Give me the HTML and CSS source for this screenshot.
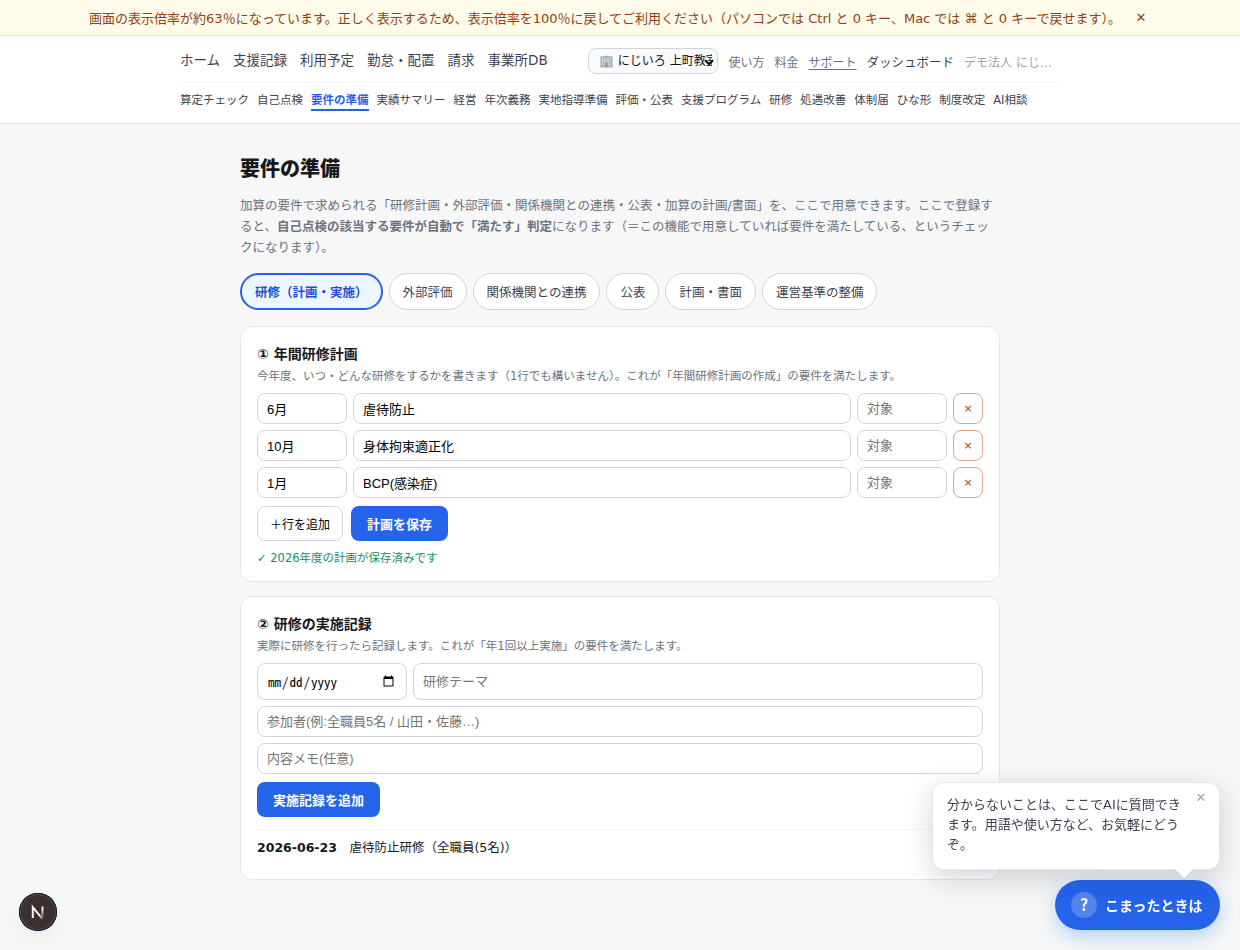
FILE: index.html
```
<!DOCTYPE html>
<html lang="ja">
<head>
    <meta charset="UTF-8">
    <title>要件の準備</title>
    <link rel="stylesheet" href="styles.css">
</head>
<body>
    <div class="zoom-notice">
        <span>画面の表示倍率が約63％になっています。正しく表示するため、表示倍率を100％に戻してご利用ください（パソコンでは Ctrl と 0 キー、Mac では ⌘ と 0 キーで戻せます）。</span>
        <button type="button" class="notice-close">✕</button>
    </div>

    <header class="header">
        <div class="header-top">
            <nav class="main-nav">
                <a href="#">ホーム</a>
                <a href="#">支援記録</a>
                <a href="#">利用予定</a>
                <a href="#">勤怠・配置</a>
                <a href="#">請求</a>
                <a href="#">事業所DB</a>
            </nav>
            <select class="office">
                <option>🏢 にじいろ 上町教室</option>
            </select>
            <div class="side-nav">
                <a href="#">使い方</a>
                <a href="#">料金</a>
                <a href="#" class="support">サポート</a>
                <a href="#" class="dashboard">ダッシュボード</a>
                <span class="company">デモ法人 にじ…</span>
            </div>
        </div>
        <nav class="sub-nav">
            <a href="#">算定チェック</a>
            <a href="#">自己点検</a>
            <a href="#" class="on">要件の準備</a>
            <a href="#">実績サマリー</a>
            <a href="#">経営</a>
            <a href="#">年次義務</a>
            <a href="#">実地指導準備</a>
            <a href="#">評価・公表</a>
            <a href="#">支援プログラム</a>
            <a href="#">研修</a>
            <a href="#">処遇改善</a>
            <a href="#">体制届</a>
            <a href="#">ひな形</a>
            <a href="#">制度改定</a>
            <a href="#">AI相談</a>
        </nav>
    </header>

    <main class="main">
        <h1>要件の準備</h1>
        <p class="lead">加算の要件で求められる「研修計画・外部評価・関係機関との連携・公表・加算の計画/書面」を、ここで用意できます。ここで登録すると、<b>自己点検の該当する要件が自動で「満たす」判定</b>になります（＝この機能で用意していれば要件を満たしている、というチェックになります）。</p>

        <div class="tabs">
            <button type="button" class="on">研修（計画・実施）</button>
            <button type="button">外部評価</button>
            <button type="button">関係機関との連携</button>
            <button type="button">公表</button>
            <button type="button">計画・書面</button>
            <button type="button">運営基準の整備</button>
        </div>

        <section class="card plan">
            <h2>① 年間研修計画</h2>
            <p class="desc">今年度、いつ・どんな研修をするかを書きます（1行でも構いません）。これが「年間研修計画の作成」の要件を満たします。</p>
            <div class="plan-row">
                <input type="text" value="6月">
                <input type="text" value="虐待防止">
                <input type="text" placeholder="対象">
                <button type="button" class="del">×</button>
            </div>
            <div class="plan-row">
                <input type="text" value="10月">
                <input type="text" value="身体拘束適正化">
                <input type="text" placeholder="対象">
                <button type="button" class="del">×</button>
            </div>
            <div class="plan-row">
                <input type="text" value="1月">
                <input type="text" value="BCP(感染症)">
                <input type="text" placeholder="対象">
                <button type="button" class="del">×</button>
            </div>
            <div class="btns">
                <button type="button" class="btn-line">＋行を追加</button>
                <button type="button" class="btn">計画を保存</button>
            </div>
            <p class="saved">✓ 2026年度の計画が保存済みです</p>
        </section>

        <section class="card record">
            <h2>② 研修の実施記録</h2>
            <p class="desc">実際に研修を行ったら記録します。これが「年1回以上実施」の要件を満たします。</p>
            <div class="record-row">
                <input type="date" class="date">
                <input type="text" placeholder="研修テーマ">
            </div>
            <input type="text" class="wide" placeholder="参加者(例:全職員5名 / 山田・佐藤…)">
            <input type="text" class="wide" placeholder="内容メモ(任意)">
            <div class="btns">
                <button type="button" class="btn">実施記録を追加</button>
            </div>
            <div class="log"><b>2026-06-23</b><span>虐待防止研修（全職員(5名)）</span></div>
        </section>
    </main>

    <div class="help">
        <div class="bubble">
            <p>分からないことは、ここでAIに質問できます。用語や使い方など、お気軽にどうぞ。</p>
            <button type="button" class="bubble-close">✕</button>
        </div>
        <button type="button" class="help-btn"><span class="q">?</span>こまったときは</button>
    </div>

    <div class="dev-badge">
        <svg width="38" height="38" viewBox="0 0 38 38" fill="none">
            <defs>
                <linearGradient id="fade" x1="0" y1="13" x2="0" y2="25" gradientUnits="userSpaceOnUse">
                    <stop offset="0.3" stop-color="#fff"/>
                    <stop offset="1" stop-color="#fff" stop-opacity="0.1"/>
                </linearGradient>
                <linearGradient id="diag" x1="14" y1="14" x2="25" y2="27" gradientUnits="userSpaceOnUse">
                    <stop offset="0.6" stop-color="#fff"/>
                    <stop offset="1" stop-color="#fff" stop-opacity="0"/>
                </linearGradient>
            </defs>
            <path d="M13.8 25V14.2L23.4 25.8" stroke="url(#diag)" stroke-width="2"/>
            <path d="M22.6 13.4h1.8v11.6h-1.8z" fill="url(#fade)"/>
        </svg>
    </div>
</body>
</html>
```
FILE: styles.css
```
* {padding: 0; margin: 0; box-sizing: border-box;}
body {height: 950px; overflow: hidden; background: #f7f7f7; color: #18181b;
    font-family: "DejaVu Sans", "Noto Sans CJK JP", sans-serif; font-size: 13px;}
a {color: inherit; text-decoration: none;}
button {font-family: inherit; cursor: pointer;}

.zoom-notice {display: flex; justify-content: center; align-items: center; gap: 10px; height: 36px;
    background: #fffbeb; border-bottom: 1px solid #fde68a; color: #92400e; font-size: 13px; white-space: nowrap;}
.notice-close {width: 20px; border: 0; background: none; color: #92400e; font-size: 13px;}

.header {height: 88px; background: #fff; border-bottom: 1px solid #e5e7eb;}
.header-top {display: flex; align-items: center; width: 880px; height: 47px; margin: 0 auto; padding-top: 3px;
    border-bottom: 1px solid #f3f4f6; white-space: nowrap;}
.main-nav {display: flex; gap: 13px; width: 408px; padding-bottom: 3px; color: #3f3f50; font-size: 13.5px;}
.office {width: 130px; height: 26px; padding: 0 5px 0 10px; border: 1px solid #d1d5db; border-radius: 8px; appearance: none;
    background: #f8fafc url("data:image/svg+xml,%3Csvg xmlns='http://www.w3.org/2000/svg' width='10' height='7'%3E%3Cpath d='M1 1.2l4 4 4-4' fill='none' stroke='%23000' stroke-width='2'/%3E%3C/svg%3E") no-repeat right 3px top 10px;
    color: #111; font-family: inherit; font-size: 12px;}
.side-nav {display: flex; align-items: center; gap: 10px; margin-left: 10.5px; padding-top: 2px; color: #6b7280; font-size: 12px;}
.side-nav .support {text-decoration: underline; text-underline-offset: 2px;}
.side-nav .dashboard {color: #3f3f50; font-size: 12.5px;}
.company {color: #9ca3af;}
.sub-nav {display: flex; gap: 8px; width: 880px; margin: 0 auto; padding-top: 8px; color: #3f3f50;
    font-size: 11.5px; line-height: 18px; white-space: nowrap;}
.sub-nav a {height: 20px;}
.sub-nav .on {border-bottom: 2px solid #2563eb; color: #2563eb; font-weight: bold;}

.main {width: 760px; margin: 0 auto; padding-top: 30px;}
h1 {font-size: 20px; font-weight: 800; line-height: 30px;}
.lead {margin-top: 11px; color: #6b7280; font-size: 12.5px; line-height: 21px;}
.tabs {display: flex; gap: 6px; margin: 15px 0 16px;}
.tabs button {height: 37px; padding: 0 13px; border: 1px solid #d1d5db; border-radius: 19px; background: #fff;
    color: #3f3f50; font-size: 12.5px; white-space: nowrap;}
.tabs .on {border: 2px solid #2563eb; background: #ecf6ff; color: #1d4ed8; font-weight: bold;}

.card {margin-bottom: 14px; padding: 16px; border: 1px solid #e5e7eb; border-radius: 12px; background: #fff;}
.plan {height: 256px;}
.record {height: 284px;}
.card h2 {font-size: 14px; line-height: 22px;}
.desc {margin: 1px 0 7px; color: #6b7280; font-size: 11.5px; line-height: 20px;}
.card input {width: 100%; height: 31px; padding: 0 9px; border: 1px solid #d1d5db; border-radius: 8px; background: #fff;
    font-family: "Liberation Sans", "Noto Sans CJK JP", sans-serif; font-size: 13px;}
.plan-row {display: grid; grid-template-columns: 90px 1fr 90px 30px; gap: 6px; margin-bottom: 6px;}
.del {border: 1px solid #dba88e; border-radius: 8px; background: #fff; color: #9a4a12; font-size: 11px;}
.btns {display: flex; gap: 8px; margin-top: 8px;}
.btn {height: 35px; padding: 0 16px; border: 0; border-radius: 8px; background: #2563eb; color: #fff; font-size: 13px; font-weight: bold;}
.btn-line {height: 35px; padding: 0 12px; border: 1px solid #d1d5db; border-radius: 8px; background: #fff; font-size: 12px;}
.saved {margin-top: 8px; color: #15906c; font-size: 11.5px; line-height: 18px;}
.record-row {display: grid; grid-template-columns: 150px 1fr; gap: 6px;}
.record-row input {height: 37px;}
.record-row .date {font-family: "Noto Sans Mono CJK JP", monospace;}
.card .wide {display: block; margin-top: 6px;}
.log {display: flex; gap: 12.5px; margin-top: 12px; padding-top: 8px; border-top: 1px solid #f3f4f6; font-size: 12.5px; line-height: 20px;}

.help {position: fixed; right: 20px; bottom: 20px; display: flex; flex-direction: column; align-items: flex-end; gap: 10px;}
.bubble {position: relative; width: 288px; height: 88px; padding: 12px 34px 12px 14px; border: 1px solid #e5e7eb; border-radius: 12px;
    background: #fff; box-shadow: 0 8px 28px rgba(15, 23, 42, 0.18); color: #3f3f50; font-size: 13px; line-height: 20.15px;}
.bubble::after {content: ""; position: absolute; right: 26px; bottom: -9px; border: 9px solid transparent;
    border-top-color: #fff; border-bottom: 0;}
.bubble-close {position: absolute; top: 4px; right: 8px; width: 20px; height: 20px; border: 0; background: none; color: #9ca3af; font-size: 13px;}
.help-btn {display: flex; align-items: center; gap: 8px; width: 165px; height: 50px; padding: 0 16px; border: 0; border-radius: 25px;
    background: #2563eb; box-shadow: 0 6px 20px rgba(37, 140, 235, 0.35); color: #fff; font-size: 14px; font-weight: bold; white-space: nowrap;}
.q {width: 26px; height: 26px; border-radius: 50%; background: rgba(255, 255, 255, 0.22);
    font-family: "Noto Sans CJK JP", sans-serif; font-size: 16px; line-height: 25px;}

.dev-badge {position: fixed; left: 19px; bottom: 19px; width: 38px; height: 38px; border-radius: 50%; background: #3a3030;
    box-shadow: inset 0 0 0 1px #17171d, inset 0 0 0 2px #4b5063, 0 8px 20px rgba(0, 0, 0, 0.05);}
```
